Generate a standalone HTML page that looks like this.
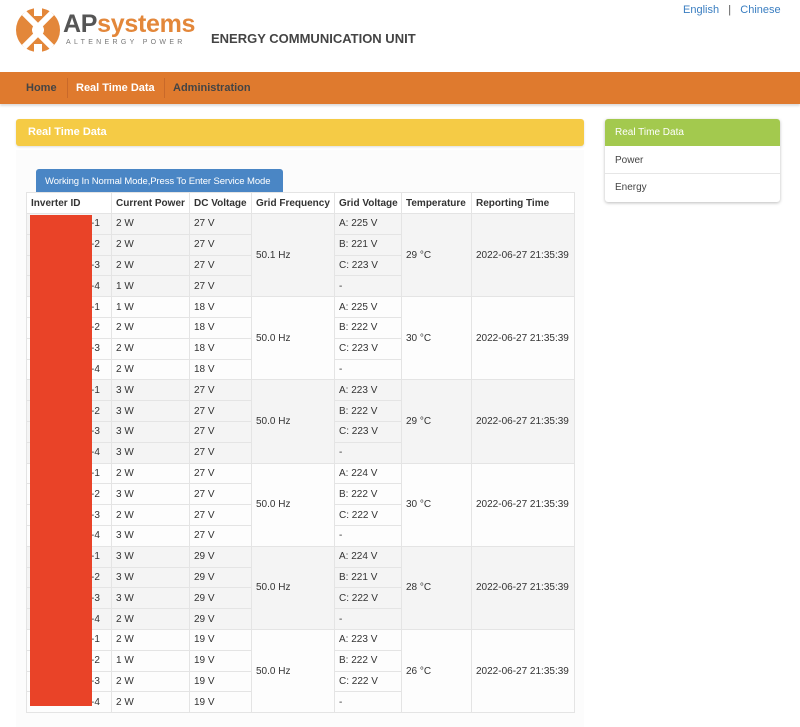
<!DOCTYPE html>
<html><head><meta charset="utf-8"><style>
*{box-sizing:border-box;margin:0;padding:0}
body{width:800px;height:727px;background:#fff;font-family:"Liberation Sans",Arial,sans-serif;position:relative;overflow:hidden;color:#333}
.abs{position:absolute}
.nav{left:0;top:72px;width:800px;height:32px;background:#df7a2e;box-shadow:0 2px 2px #ddd}
.nav span{position:absolute;top:10px;font-size:11px;font-weight:bold;color:#444}
table{border-collapse:collapse;position:absolute;left:26px;top:192px;width:548px;font-size:10px;table-layout:fixed}
td,th{border:1px solid #e4e4e4;height:20.8px;padding:0 4px;text-align:left;vertical-align:middle;white-space:nowrap;overflow:hidden}
th{font-weight:bold;height:21px;background:#fff}
tbody.g td{background:#f4f4f4}
tbody.w td{background:#fdfdfd}
td.id{padding-left:64px}
</style></head><body>
<svg class="abs" style="left:15px;top:7px" width="46" height="46" viewBox="0 0 46 46">
<circle cx="23" cy="23" r="22" fill="#e3873a"/>
<path d="M9 6 L23 20 L37 6 M9 40 L23 26 L37 40" stroke="#fff" stroke-width="6" fill="none"/>
<circle cx="23" cy="23" r="6" fill="#fff"/>
<rect x="19" y="0" width="8" height="9" fill="#fff"/>
<rect x="19" y="37" width="8" height="9" fill="#fff"/>
</svg>
<div class="abs" style="left:63px;top:10px;font-size:25px;font-weight:bold;letter-spacing:-0.3px;line-height:28px"><span style="color:#555">AP</span><span style="color:#e3873a">systems</span></div>
<div class="abs" style="left:66px;top:39px;font-size:7px;letter-spacing:3.3px;color:#777">ALTENERGY POWER</div>
<div class="abs" style="left:211px;top:31px;font-size:13px;font-weight:bold;color:#444">ENERGY COMMUNICATION UNIT</div>
<div class="abs" style="left:683px;top:4px;font-size:11px;color:#3a7ec1">English &nbsp;&nbsp;<span style="color:#555">|</span>&nbsp;&nbsp; Chinese</div>
<div class="abs nav">
<span style="left:26px">Home</span>
<div class="abs" style="left:67px;top:6px;width:1px;height:20px;background:#c9692a"></div>
<span style="left:76px;color:#fff">Real Time Data</span>
<div class="abs" style="left:164px;top:6px;width:1px;height:20px;background:#c9692a"></div>
<span style="left:173px">Administration</span>
</div>
<div class="abs" style="left:16px;top:119px;width:568px;height:27px;background:#f5cb45;border-radius:3px;box-shadow:0 1px 2px #ddd;color:#fff;font-weight:bold;font-size:11px;padding:7px 12px">Real Time Data</div>
<div class="abs" style="left:16px;top:150px;width:568px;height:577px;background:#fcfcfc"></div>
<div class="abs" style="left:36px;top:169px;width:247px;height:23px;background:#4a86c5;border-radius:3px 3px 0 0;color:#fff;font-size:9.5px;padding:7px 0 0 9px;white-space:nowrap;letter-spacing:-0.1px">Working In Normal Mode,Press To Enter Service Mode</div>
<div class="abs" style="left:605px;top:119px;width:175px;height:83px;background:#fff;border-radius:3px;box-shadow:0 1px 3px #bbb;font-size:10px;color:#444">
<div style="height:27px;background:#a3c94e;color:#fff;padding:8px 10px;border-radius:3px 3px 0 0">Real Time Data</div>
<div style="height:28px;padding:9px 10px;border-bottom:1px solid #e6e6e6">Power</div>
<div style="padding:8px 10px">Energy</div>
</div>
<table>
<colgroup><col style="width:85px"><col style="width:78px"><col style="width:62px"><col style="width:83px"><col style="width:67px"><col style="width:70px"><col style="width:103px"></colgroup>
<thead><tr><th>Inverter ID</th><th>Current Power</th><th>DC Voltage</th><th>Grid Frequency</th><th>Grid Voltage</th><th>Temperature</th><th>Reporting Time</th></tr></thead>
<tbody class="g"><tr><td class="id">-1</td><td>2 W</td><td>27 V</td><td rowspan="4">50.1 Hz</td><td>A: 225 V</td><td rowspan="4">29 °C</td><td rowspan="4">2022-06-27 21:35:39</td></tr><tr><td class="id">-2</td><td>2 W</td><td>27 V</td><td>B: 221 V</td></tr><tr><td class="id">-3</td><td>2 W</td><td>27 V</td><td>C: 223 V</td></tr><tr><td class="id">-4</td><td>1 W</td><td>27 V</td><td>-</td></tr></tbody>
<tbody class="w"><tr><td class="id">-1</td><td>1 W</td><td>18 V</td><td rowspan="4">50.0 Hz</td><td>A: 225 V</td><td rowspan="4">30 °C</td><td rowspan="4">2022-06-27 21:35:39</td></tr><tr><td class="id">-2</td><td>2 W</td><td>18 V</td><td>B: 222 V</td></tr><tr><td class="id">-3</td><td>2 W</td><td>18 V</td><td>C: 223 V</td></tr><tr><td class="id">-4</td><td>2 W</td><td>18 V</td><td>-</td></tr></tbody>
<tbody class="g"><tr><td class="id">-1</td><td>3 W</td><td>27 V</td><td rowspan="4">50.0 Hz</td><td>A: 223 V</td><td rowspan="4">29 °C</td><td rowspan="4">2022-06-27 21:35:39</td></tr><tr><td class="id">-2</td><td>3 W</td><td>27 V</td><td>B: 222 V</td></tr><tr><td class="id">-3</td><td>3 W</td><td>27 V</td><td>C: 223 V</td></tr><tr><td class="id">-4</td><td>3 W</td><td>27 V</td><td>-</td></tr></tbody>
<tbody class="w"><tr><td class="id">-1</td><td>2 W</td><td>27 V</td><td rowspan="4">50.0 Hz</td><td>A: 224 V</td><td rowspan="4">30 °C</td><td rowspan="4">2022-06-27 21:35:39</td></tr><tr><td class="id">-2</td><td>3 W</td><td>27 V</td><td>B: 222 V</td></tr><tr><td class="id">-3</td><td>2 W</td><td>27 V</td><td>C: 222 V</td></tr><tr><td class="id">-4</td><td>3 W</td><td>27 V</td><td>-</td></tr></tbody>
<tbody class="g"><tr><td class="id">-1</td><td>3 W</td><td>29 V</td><td rowspan="4">50.0 Hz</td><td>A: 224 V</td><td rowspan="4">28 °C</td><td rowspan="4">2022-06-27 21:35:39</td></tr><tr><td class="id">-2</td><td>3 W</td><td>29 V</td><td>B: 221 V</td></tr><tr><td class="id">-3</td><td>3 W</td><td>29 V</td><td>C: 222 V</td></tr><tr><td class="id">-4</td><td>2 W</td><td>29 V</td><td>-</td></tr></tbody>
<tbody class="w"><tr><td class="id">-1</td><td>2 W</td><td>19 V</td><td rowspan="4">50.0 Hz</td><td>A: 223 V</td><td rowspan="4">26 °C</td><td rowspan="4">2022-06-27 21:35:39</td></tr><tr><td class="id">-2</td><td>1 W</td><td>19 V</td><td>B: 222 V</td></tr><tr><td class="id">-3</td><td>2 W</td><td>19 V</td><td>C: 222 V</td></tr><tr><td class="id">-4</td><td>2 W</td><td>19 V</td><td>-</td></tr></tbody>
</table>
<div class="abs" style="left:30px;top:215px;width:62px;height:491px;background:#e94328"></div>
</body></html>
